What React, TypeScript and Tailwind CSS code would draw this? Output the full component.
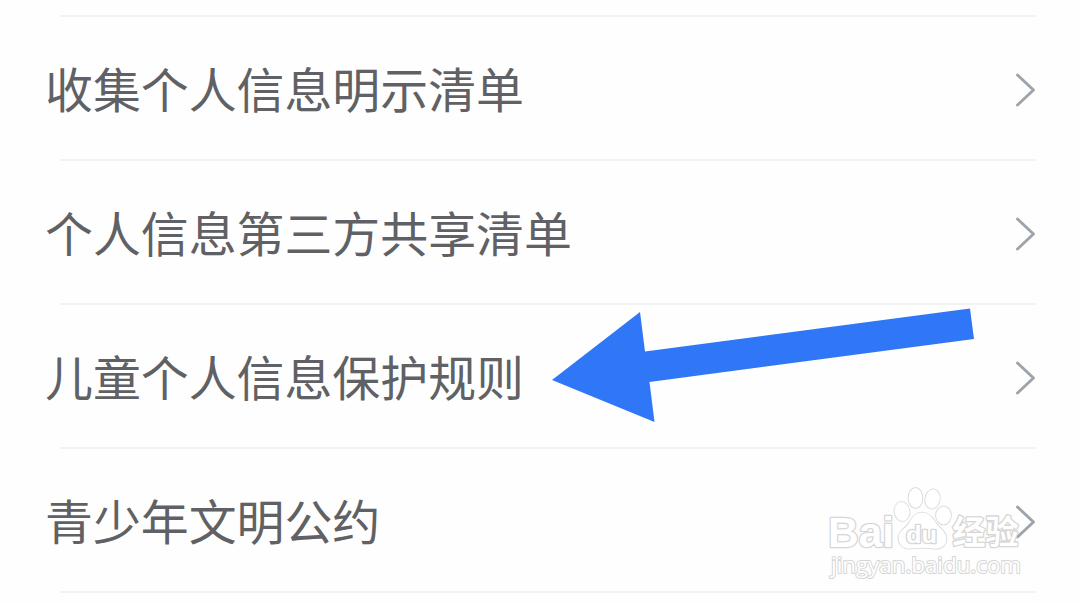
const items = [
	'收集个人信息明示清单',
	'个人信息第三方共享清单',
	'儿童个人信息保护规则',
	'青少年文明公约',
];

function Chevron() {
	return (
		<svg
			className="mt-[3px] h-9 w-[22px] shrink-0"
			viewBox="0 0 22 36"
			fill="none"
			stroke="#9ba3ab"
			strokeWidth="2.9"
			strokeLinecap="round"
		>
			<path d="M4.500 3 20.500 18 4.500 33" />
		</svg>
	);
}

function Arrow() {
	return (
		<svg
			className="pointer-events-none absolute top-[300px] left-[540px] h-[130px] w-[440px]"
			viewBox="540 300 440 130"
			fill="#2f77f6"
		>
			<path d="M552 380 640 312 645 351.5 970 308.5 974 339 649.5 382 654.5 422Z" />
		</svg>
	);
}

function Watermark() {
	return (
		<svg
			className="pointer-events-none absolute top-[483px] left-[820px] h-[100px] w-[210px]"
			viewBox="820 483 210 100"
			fill="#fff"
			stroke="#d6d6d6"
			strokeWidth="2.6"
			strokeLinejoin="round"
			paintOrder="stroke"
		>
			<text
				x="828"
				y="547"
				textLength="66"
				lengthAdjust="spacingAndGlyphs"
				className="font-['Liberation_Sans',sans-serif] text-[43px] font-bold"
			>
				Bai
			</text>
			<g strokeWidth="1.6">
				<ellipse cx="902" cy="511.5" rx="7.5" ry="9.500" transform="rotate(-8 902 511.5)" />
				<ellipse cx="915.5" cy="498" rx="7" ry="10" />
				<ellipse cx="932.5" cy="499" rx="7.2" ry="9.7" transform="rotate(10 932.5 499)" />
				<ellipse cx="943.5" cy="515.5" rx="7.5" ry="9" />
				<path d="M922 512.5C929 512.5 933 518 936 523 940 529 947 532 946.5 539.5 946 547 939 549.5 933 548.5 926 547.5 918 547.5 911 548.5 904 549.5 898.5 545 898.5 538 898.5 531 905 529 909 523 912.5 517.5 915 512.5 922 512.5Z" />
			</g>
			<text
				x="906"
				y="543"
				textLength="31"
				lengthAdjust="spacingAndGlyphs"
				className="font-['Liberation_Sans',sans-serif] text-[23px] font-bold"
			>
				du
			</text>
			<text
				x="952.5"
				y="544"
				className="font-['Noto_Sans_CJK_SC',sans-serif] text-[33px] font-bold"
			>
				经验
			</text>
			<text
				x="831"
				y="573"
				textLength="190"
				lengthAdjust="spacingAndGlyphs"
				strokeWidth="2"
				className="font-['Open_Sans',sans-serif] text-[22px]"
			>
				jingyan.baidu.com
			</text>
		</svg>
	);
}

export default function App() {
	return (
		<main className="relative h-[603px] w-[1080px] overflow-hidden bg-[#fefefe] pt-[15px] pr-[45px] pl-[45px]">
			<div className="ml-[15px] h-0.5 bg-[#f2f2f2]" />
			<ul>
				{items.map((item) => (
					<li key={item}>
						<div className="flex h-[142px] items-center justify-between">
							<span className="-mt-0.5 font-['Noto_Sans_CJK_SC',sans-serif] text-[47.900px] leading-[72px] text-[#606164]">
								{item}
							</span>
							<Chevron />
						</div>
						<div className="ml-[15px] h-0.5 bg-[#f2f2f2]" />
					</li>
				))}
			</ul>
			<Arrow />
			<Watermark />
		</main>
	);
}
